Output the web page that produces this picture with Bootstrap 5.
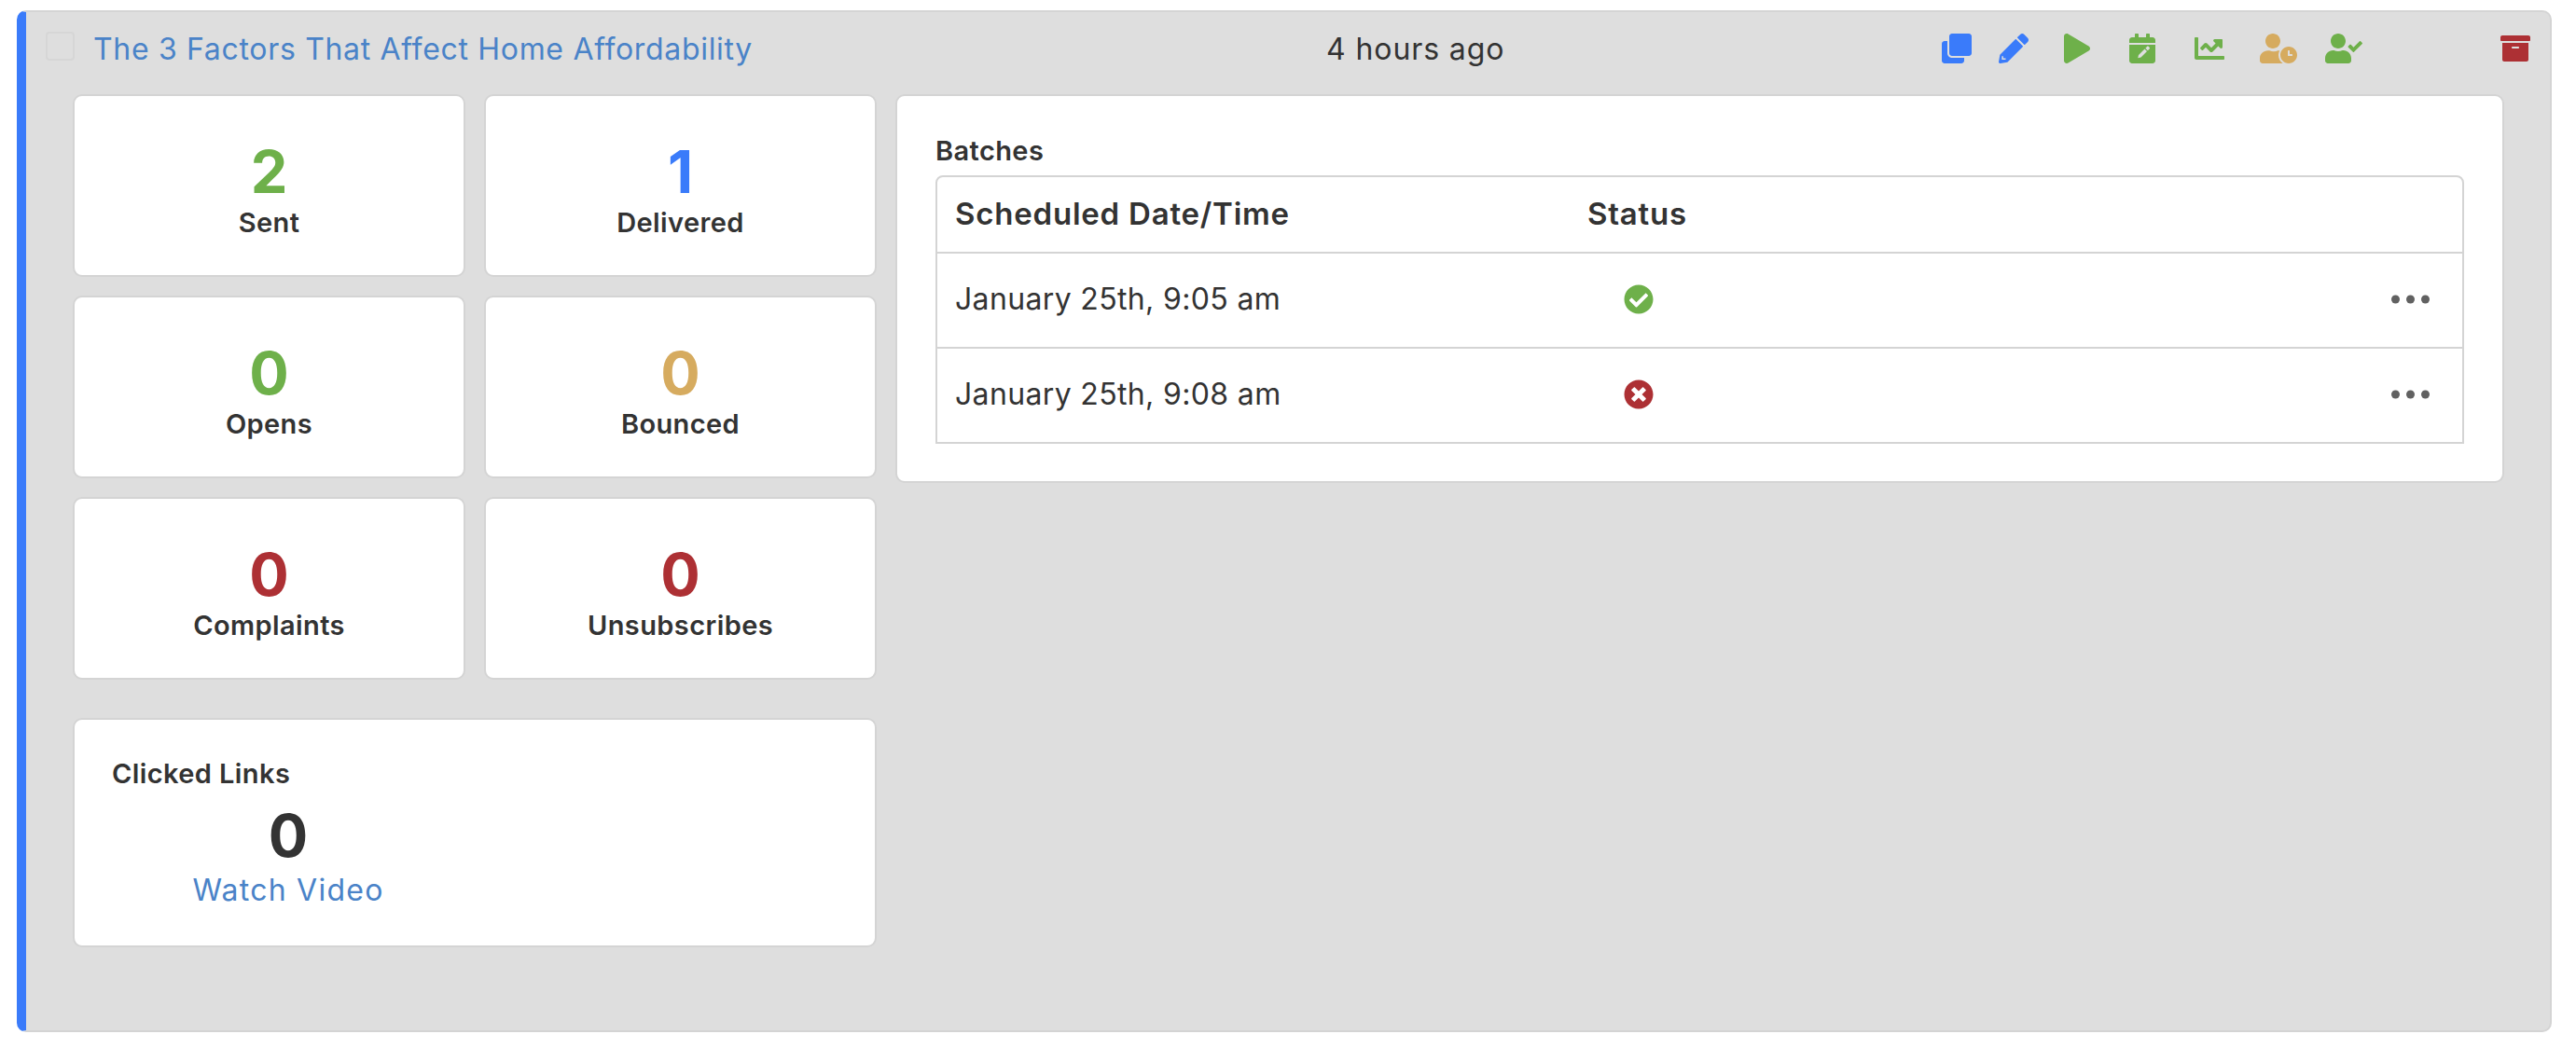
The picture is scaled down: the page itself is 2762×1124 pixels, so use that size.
<!DOCTYPE html>
<html lang="en">
<head>
<meta charset="utf-8">
<title>Campaign</title>
<link href="https://cdn.jsdelivr.net/npm/bootstrap@5.3.0/dist/css/bootstrap.min.css" rel="stylesheet">
<style>
html,body{background:#fff;}
body{margin:0;font-family:"Inter","Liberation Sans",sans-serif;color:#333;font-size:32px;}
.panel{margin:11px 26px 17px 18px;height:1096px;background:#dedede;border:2px solid #d4d4d4;border-left:10px solid #3a7bfa;border-radius:10px;}
.head{height:88px;padding-top:21px;padding-left:21px;}
.fake-check{width:31px;height:31px;border:2px solid #d6d6d6;border-radius:4px;flex:none;}
.title-link{margin-left:20px;width:899px;flex:none;color:#4a83c8;font-size:32px;line-height:40px;text-decoration:none;margin-top:-1px;letter-spacing:.68px;white-space:nowrap;}
.time-txt{width:660px;flex:none;margin-left:423px;font-size:32px;line-height:40px;margin-top:-1px;letter-spacing:.9px;white-space:nowrap;}
.ic{height:32px;flex:none;display:block;margin-top:2px;}
.blue{fill:#3a7bfa}.green{fill:#6eb04a}.gold{fill:#d6ab5f}.red{fill:#ad3034}
.ml-pen{margin-left:29px}.ml-play{margin-left:38px}.ml-cal{margin-left:42px}.ml-chart{margin-left:42px}.ml-clock{margin-left:38px}.ml-check{margin-left:30px}.ml-arch{margin-left:148px}
.content{padding-left:50px;gap:20px;}
.left-col{width:862px;flex:none;}
.stats{display:grid;grid-template-columns:421px 421px;grid-auto-rows:196px;column-gap:20px;row-gap:20px;}
.tile{border:2px solid #d4d4d4;border-radius:10px;background:#fff;}
.stat{align-items:center;padding-top:43px;}
.num{font-size:63px;line-height:76px;font-weight:700;}
.lab{font-size:29px;line-height:36px;font-weight:600;letter-spacing:.4px;margin-top:-1px;}
.c-g{color:#6eb04a}.c-b{color:#3a7bfa}.c-o{color:#d6ab5f}.c-r{color:#ad3034}
.links{height:246px;margin-top:41px;padding:40px 0 0 40px;}
.sect{font-size:29px;line-height:36px;font-weight:600;letter-spacing:.4px;}
.links-body{width:378px;align-items:center;margin-top:10px;}
.num2{font-size:63px;line-height:76px;font-weight:700;color:#333;}
.watch{font-size:32px;line-height:40px;color:#4a83c8;text-decoration:none;margin-top:1px;letter-spacing:1.25px;}
.batches{width:1725px;flex:none;height:417px;padding:41px 41px 0 41px;}
.tbl-wrap{margin-top:8px;width:1639px;height:288px;border:2px solid #d4d4d4;border-radius:8px 8px 0 0;overflow:hidden;}
.tbl{table-layout:fixed;margin:0;color:#333;}
.tbl td,.tbl th{border:0;padding:0 0 0 19px;vertical-align:middle;font-size:32px;letter-spacing:.35px;}
.tbl th{font-weight:600;height:81px;border-bottom:2px solid #d4d4d4;font-size:33px;letter-spacing:.78px;}
.tbl td{height:102px;border-bottom:2px solid #d4d4d4;padding-bottom:2px;}
.tbl tr:last-child td{border-bottom:0;height:101px;}
.col-date{width:678px}
.col-state{width:400px}
.st-ic{width:32px;height:32px;margin-left:39px;display:block;}
.dots{width:41px;height:10px;display:block;margin-left:auto;margin-right:35px;fill:#616161;}
.cut{fill:#dedede}
.cut-s{stroke:#dedede;fill:none}
</style>
</head>
<body>
<div class="panel">
  <div class="head d-flex align-items-start">
    <span class="fake-check"></span>
    <a class="title-link" href="#">The 3 Factors That Affect Home Affordability</a>
    <span class="time-txt">4 hours ago</span>
    <svg class="ic blue" viewBox="0 0 512 512" width="32"><path d="M464 0c26.51 0 48 21.49 48 48v288c0 26.51-21.49 48-48 48H176c-26.51 0-48-21.49-48-48V48c0-26.51 21.49-48 48-48h288M176 416c-44.112 0-80-35.888-80-80V128H48c-26.51 0-48 21.49-48 48v288c0 26.51 21.49 48 48 48h288c26.51 0 48-21.49 48-48v-48H176z"/></svg>
    <svg class="ic blue ml-pen" viewBox="0 0 512 512" width="32"><path d="M497.9 142.1l-46.1 46.1c-4.7 4.7-12.3 4.7-17 0l-111-111c-4.7-4.7-4.7-12.3 0-17l46.1-46.1c18.7-18.7 49.1-18.7 67.9 0l60.1 60.1c18.8 18.7 18.8 49.1 0 67.9zM284.2 99.8L21.6 362.4.4 483.9c-2.9 16.4 11.4 30.6 27.8 27.8l121.5-21.3 262.6-262.6c4.7-4.7 4.7-12.3 0-17l-111-111c-4.8-4.7-12.4-4.7-17.1 0z"/><path class="cut-s" stroke-width="24" d="M66 386v50h54"/></svg>
    <svg class="ic green ml-play" viewBox="0 0 448 512" width="28"><path d="M424.4 214.7L72.4 6.6C43.8-10.3 0 6.1 0 47.9V464c0 37.5 40.7 60.1 72.4 41.3l352-208c31.4-18.5 31.5-64.1 0-82.6z"/></svg>
    <svg class="ic green ml-cal" viewBox="0 0 448 512" width="28"><path d="M0 464c0 26.500 21.500 48 48 48h352c26.500 0 48-21.500 48-48V192H0v272zM448 112c0-26.500-21.500-48-48-48h-48V16c0-8.800-7.200-16-16-16h-32c-8.800 0-16 7.200-16 16v48H160V16c0-8.800-7.200-16-16-16h-32c-8.800 0-16 7.200-16 16v48H48C21.500 64 0 85.500 0 112v48h448v-48z"/><path class="cut" d="M278 250l30-30c6-6 15-6 21 0l19 19c6 6 6 15 0 21l-30 30zM264 264l40 40-104 104-52 12 12-52z"/></svg>
    <svg class="ic green ml-chart" viewBox="0 0 512 512" width="32"><path d="M496 384H64V80c0-8.840-7.160-16-16-16H16C7.160 64 0 71.160 0 80v336c0 17.670 14.330 32 32 32h464c8.840 0 16-7.160 16-16v-32c0-8.840-7.160-16-16-16zM464 96H345.940c-21.380 0-32.090 25.850-16.970 40.970l32.400 32.400L288 242.750l-73.370-73.370c-12.500-12.500-32.760-12.500-45.250 0l-68.690 68.690c-6.250 6.250-6.250 16.380 0 22.630l22.620 22.620c6.250 6.250 16.380 6.250 22.630 0L192 237.250l73.370 73.370c12.500 12.500 32.760 12.500 45.250 0l96-96 32.400 32.400c15.120 15.120 40.970 4.410 40.970-16.970V112c.01-8.840-7.150-16-16-16z"/></svg>
    <svg class="ic gold ml-clock" viewBox="0 0 640 512" width="40"><path d="M496 224c-79.600 0-144 64.400-144 144s64.400 144 144 144 144-64.400 144-144-64.400-144-144-144zm64 150.300c0 5.300-4.400 9.700-9.700 9.700h-60.600c-5.300 0-9.700-4.400-9.700-9.700v-76.600c0-5.300 4.400-9.700 9.700-9.700h12.600c5.300 0 9.700 4.400 9.700 9.700V352h38.300c5.300 0 9.700 4.400 9.700 9.700v12.600zM320 368c0-27.800 7.200-53.600 19.900-76.300-3.900-.3-7.800-1.200-11.800-1.200h-16.700c-22.200 10.200-46.900 16-72.900 16s-50.600-5.800-72.900-16h-16.700C60.200 288 0 348.200 0 422.400V464c0 26.500 21.500 48 48 48h347.100c-45.300-31.900-75.100-84.500-75.100-144zm-96-112c70.700 0 128-57.300 128-128S294.700 0 224 0 96 57.300 96 128s57.300 128 128 128z"/></svg>
    <svg class="ic green ml-check" viewBox="0 0 640 512" width="40"><path d="M224 256c70.700 0 128-57.300 128-128S294.700 0 224 0 96 57.300 96 128s57.300 128 128 128zm89.600 32h-16.700c-22.200 10.200-46.900 16-72.900 16s-50.600-5.800-72.900-16h-16.700C60.200 288 0 348.200 0 422.400V464c0 26.500 21.500 48 48 48h352c26.500 0 48-21.500 48-48v-41.600c0-74.200-60.200-134.400-134.400-134.400zm323-128.400l-27.800-28.100c-4.600-4.700-12.100-4.700-16.800-.1l-104.800 104-45.500-45.800c-4.600-4.700-12.100-4.700-16.800-.1l-28.100 27.900c-4.700 4.600-4.700 12.100-.1 16.800l81.700 82.300c4.600 4.700 12.100 4.700 16.800.1l141.300-140.200c4.600-4.700 4.700-12.200.1-16.800z"/></svg>
    <svg class="ic red ml-arch" viewBox="0 0 512 512" width="32"><path d="M32 448c0 17.700 14.300 32 32 32h384c17.700 0 32-14.300 32-32V160H32v288zm160-212c0-6.600 5.400-12 12-12h104c6.600 0 12 5.400 12 12v8c0 6.600-5.400 12-12 12H204c-6.600 0-12-5.400-12-12v-8zM480 32H32C14.300 32 0 46.300 0 64v48c0 8.800 7.200 16 16 16h480c8.800 0 16-7.200 16-16V64c0-17.700-14.300-32-32-32z"/></svg>
  </div>
  <div class="content d-flex align-items-start">
    <div class="left-col">
      <div class="stats">
        <div class="tile stat d-flex flex-column"><div class="num c-g">2</div><div class="lab">Sent</div></div>
        <div class="tile stat d-flex flex-column"><div class="num c-b">1</div><div class="lab">Delivered</div></div>
        <div class="tile stat d-flex flex-column"><div class="num c-g">0</div><div class="lab">Opens</div></div>
        <div class="tile stat d-flex flex-column"><div class="num c-o">0</div><div class="lab">Bounced</div></div>
        <div class="tile stat d-flex flex-column"><div class="num c-r">0</div><div class="lab">Complaints</div></div>
        <div class="tile stat d-flex flex-column"><div class="num c-r">0</div><div class="lab">Unsubscribes</div></div>
      </div>
      <div class="tile links">
        <div class="sect">Clicked Links</div>
        <div class="links-body d-flex flex-column">
          <div class="num2">0</div>
          <a class="watch" href="#">Watch Video</a>
        </div>
      </div>
    </div>
    <div class="tile batches">
      <div class="sect">Batches</div>
      <div class="tbl-wrap">
        <table class="table tbl">
          <colgroup><col class="col-date"><col class="col-state"><col></colgroup>
          <thead><tr><th>Scheduled Date/Time</th><th>Status</th><th></th></tr></thead>
          <tbody>
            <tr>
              <td>January 25th, 9:05 am</td>
              <td><svg class="st-ic green" viewBox="0 0 512 512"><path d="M504 256c0 136.967-111.033 248-248 248S8 392.967 8 256 119.033 8 256 8s248 111.033 248 248zM227.314 387.314l184-184c6.248-6.248 6.248-16.379 0-22.627l-22.627-22.627c-6.248-6.249-16.379-6.249-22.628 0L216 308.118l-70.059-70.059c-6.248-6.248-16.379-6.248-22.628 0l-22.627 22.627c-6.248 6.248-6.248 16.379 0 22.627l104 104c6.249 6.249 16.379 6.249 22.628.001z"/></svg></td>
              <td><svg class="dots" viewBox="0 0 41 10"><circle cx="4.500" cy="5" r="4.500"/><circle cx="20.500" cy="5" r="4.500"/><circle cx="36.500" cy="5" r="4.500"/></svg></td>
            </tr>
            <tr>
              <td>January 25th, 9:08 am</td>
              <td><svg class="st-ic red" viewBox="0 0 512 512"><path d="M256 8C119 8 8 119 8 256s111 248 248 248 248-111 248-248S393 8 256 8zm121.600 313.100c4.700 4.700 4.700 12.300 0 17L338 377.600c-4.700 4.700-12.300 4.700-17 0L256 312l-65.100 65.600c-4.700 4.700-12.300 4.700-17 0L134.400 338c-4.700-4.700-4.700-12.300 0-17l65.600-65-65.600-65.100c-4.700-4.700-4.700-12.300 0-17l39.600-39.600c4.700-4.700 12.300-4.700 17 0l65 65.700 65.100-65.600c4.700-4.700 12.300-4.700 17 0l39.600 39.600c4.700 4.700 4.700 12.300 0 17L312 256l65.600 65.100z"/></svg></td>
              <td><svg class="dots" viewBox="0 0 41 10"><circle cx="4.500" cy="5" r="4.500"/><circle cx="20.500" cy="5" r="4.500"/><circle cx="36.500" cy="5" r="4.500"/></svg></td>
            </tr>
          </tbody>
        </table>
      </div>
    </div>
  </div>
</div>
<script src="https://cdn.jsdelivr.net/npm/bootstrap@5.3.0/dist/js/bootstrap.bundle.min.js"></script>
</body>
</html>
